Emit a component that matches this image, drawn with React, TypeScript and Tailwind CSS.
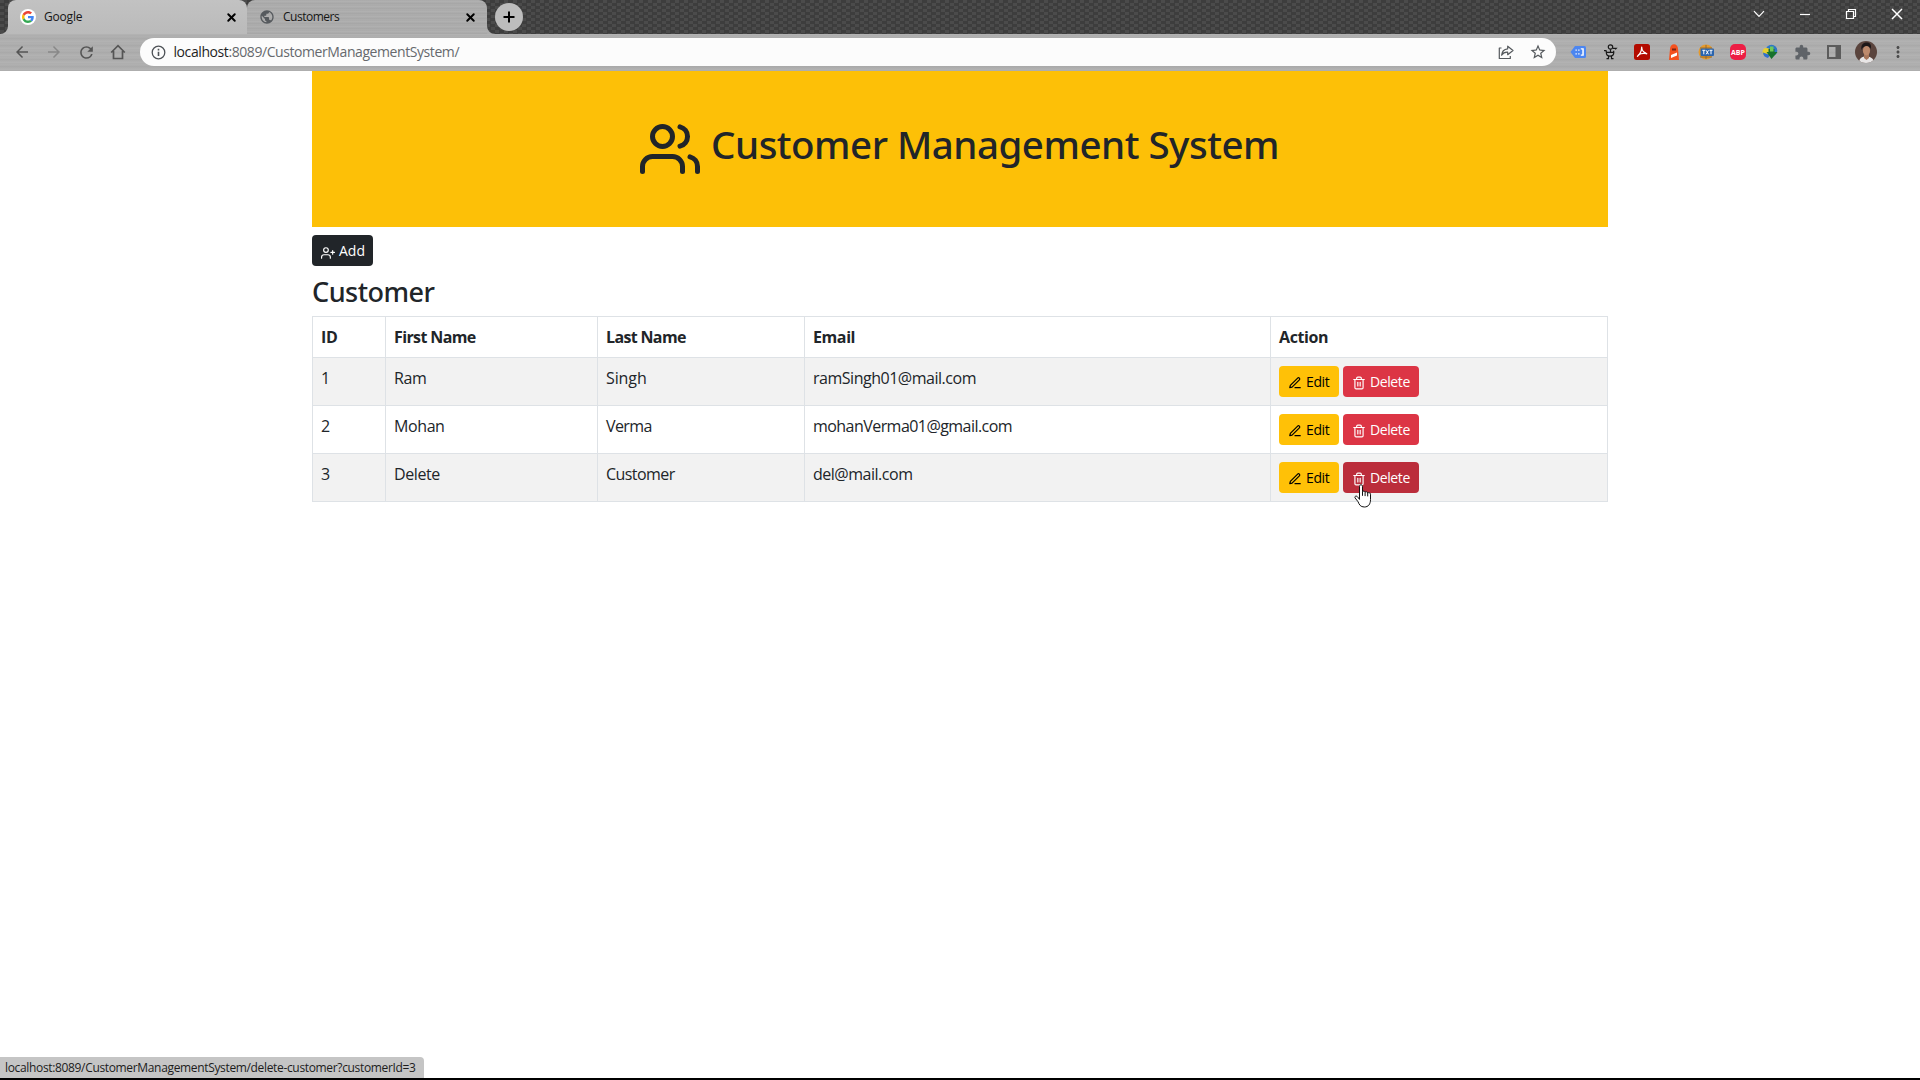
import React from "react";
import { FiUserPlus, FiEdit3, FiTrash2, FiX } from "react-icons/fi";
import { MdArrowBack, MdArrowForward, MdRefresh, MdExtension, MdMoreVert, MdPublic, MdStarBorder } from "react-icons/md";

type Customer = { id: number; first: string; last: string; email: string; emailCls: string; lastCls: string };

const customers: Customer[] = [
  { id: 1, first: "Ram", last: "Singh", email: "ramSingh01@mail.com", emailCls: "tracking-[-0.48px]", lastCls: "tracking-[-0.1px]" },
  { id: 2, first: "Mohan", last: "Verma", email: "mohanVerma01@gmail.com", emailCls: "tracking-[-0.55px]", lastCls: "tracking-[-0.6px]" },
  { id: 3, first: "Delete", last: "Customer", email: "del@mail.com", emailCls: "tracking-[-0.48px]", lastCls: "tracking-[-0.55px]" },
];

function UsersIcon() {
  return (
    <svg className="h-[60px] w-[60px] shrink-0" viewBox="0 0 24 24" fill="none" stroke="currentColor" strokeWidth="2" strokeLinecap="round" strokeLinejoin="round">
      <path d="M17 21v-2a4 4 0 0 0-4-4H5a4 4 0 0 0-4 4v2" />
      <circle cx="9" cy="7" r="4" />
      <path d="M23 21v-2a4 4 0 0 0-3-3.87" />
      <path d="M16 3.13a4 4 0 0 1 0 7.75" />
    </svg>
  );
}

function GoogleIcon() {
  return (
    <span className="flex h-4 w-4 shrink-0 items-center justify-center rounded-full bg-white">
      <svg className="h-3 w-3" viewBox="0 0 48 48">
        <path fill="#EA4335" d="M24 9.5c3.54 0 6.71 1.22 9.21 3.6l6.85-6.85C35.9 2.38 30.47 0 24 0 14.62 0 6.51 5.38 2.56 13.22l7.98 6.19C12.43 13.72 17.74 9.5 24 9.5z" />
        <path fill="#4285F4" d="M46.98 24.55c0-1.57-.15-3.09-.38-4.55H24v9.02h12.94c-.58 2.96-2.26 5.48-4.78 7.18l7.73 6c4.51-4.18 7.09-10.36 7.09-17.65z" />
        <path fill="#FBBC05" d="M10.53 28.59c-.48-1.45-.76-2.99-.76-4.59s.27-3.14.76-4.59l-7.98-6.19C.92 16.46 0 20.12 0 24c0 3.88.92 7.54 2.56 10.78l7.97-6.19z" />
        <path fill="#34A853" d="M24 48c6.48 0 11.93-2.13 15.89-5.81l-7.73-6c-2.15 1.45-4.92 2.3-8.16 2.3-6.26 0-11.57-4.22-13.47-9.91l-7.98 6.19C6.51 42.62 14.62 48 24 48z" />
      </svg>
    </span>
  );
}

function TabStrip() {
  return (
    <div className="flex h-[34px] bg-[repeating-conic-gradient(#3d3d3d_0_25%,#4b4b4b_0_50%)] bg-[size:9px_6px]">
      <div className="flex w-[8px] shrink-0 items-end">
        <svg className="h-[8px] w-[8px]" viewBox="0 0 8 8"><path d="M8 0v8H0a8 8 0 0 0 8-8z" fill="#b9b9b9" /></svg>
      </div>
      <div className="flex w-[239px] items-center rounded-t-lg bg-[linear-gradient(#c2c2c2,#bababa)] pr-[9px] pl-[12px] text-[12px] text-[#161616]">
        <GoogleIcon />
        <span className="ml-[8px] flex-1 leading-4 tracking-[-0.2px]">Google</span>
        <FiX className="h-[13px] w-[13px] text-black" strokeWidth={3.6} />
      </div>
      <div className="flex w-[240px] items-center rounded-t-lg bg-[repeating-linear-gradient(180deg,#a9a9a9_0px,#b2b2b2_2px,#a5a5a5_3px,#aeaeae_5px)] pr-[10px] pl-[12px] text-[12px] text-[#161616]">
        <MdPublic className="h-4 w-4 shrink-0 text-[#565a5e]" />
        <span className="ml-[8px] flex-1 leading-4 tracking-[-0.5px]">Customers</span>
        <FiX className="h-[13px] w-[13px] text-black" strokeWidth={3.6} />
      </div>
      <div className="flex w-[8px] shrink-0 items-end">
        <svg className="h-[8px] w-[8px]" viewBox="0 0 8 8"><path d="M0 0v8h8a8 8 0 0 1-8-8z" fill="#adadad" /></svg>
      </div>
      <div className="flex h-[34px] w-[28px] items-center">
        <svg className="h-[28px] w-[28px]" viewBox="0 0 28 28"><circle cx="14" cy="14" r="14" fill="#bdbdbd" /><path d="M14 8.500v11M8.500 14h11" stroke="#000" strokeWidth="2" /></svg>
      </div>
      <div className="flex flex-1 justify-end text-white">
        <svg className="h-7 w-[184px]" viewBox="0 0 184 28" fill="none" stroke="currentColor" strokeWidth="1.2">
          <path d="M18 11.200l5 5.200 5-5.200" />
          <path d="M64 14.500h10" />
          <path d="M110.500 11.500h7v7h-7zM112.500 11.500v-2h7v7h-2" />
          <path d="M156 9l10 10M166 9l-10 10" strokeWidth="1.500" />
        </svg>
      </div>
    </div>
  );
}

function Slot({ children }: { children: React.ReactNode }) {
  return <div className="flex h-8 w-8 items-center justify-center">{children}</div>;
}

function Extensions() {
  return (
    <div className="ml-[6px] flex items-center">
      <Slot>
        <svg className="h-4 w-4" viewBox="0 0 16 16"><path d="M5 2h9.500q1.500 0 1.500 1.500v9q0 1.500-1.500 1.500H5L.5 8z" fill="#4c86f0" /><path d="M5.500 5.500h1.300v1.300H5.500zM5.500 9.300h1.300v1.300H5.500zM8.200 5.500h1.300v1.300H8.200zM8.200 9.300h1.300v1.300H8.200zM10.800 4.300h3v7.500h-3v-1.300h1.500v-5h-1.500z" fill="#fff" /></svg>
      </Slot>
      <Slot>
        <svg className="h-4 w-4" viewBox="0 0 16 16" fill="none" stroke="#191919" strokeWidth="1.200"><circle cx="8.500" cy="3" r="2.200" /><path d="M10.700 4.300h3.500l-1 1M8.500 5.200v3M2 6.700h2l.5 1.600h7.200V6.700M4.300 8.300c0 2.300 1.400 3.900 3.700 3.900s3.800-1.600 3.800-3.900M6.500 12.300v2.400H4.500M9.500 12.300v2.400h2" /></svg>
      </Slot>
      <Slot>
        <svg className="h-4 w-4" viewBox="0 0 16 16"><rect width="16" height="16" rx="2.500" fill="#b30b00" /><path d="M7.700 3.200c.2 3 .8 4.600 5 6.600M7.700 3.200c0 3.500-.8 6-4.200 9M4.500 10.800c2.500-1.600 5-1.800 8.200-1.200" fill="none" stroke="#fff" strokeWidth="1.300" strokeLinecap="round" /></svg>
      </Slot>
      <Slot>
        <svg className="h-4 w-4" viewBox="0 0 16 16"><path d="M4 5C4 2 6 .3 8 .3S12 2 12 5l1 11H3z" fill="#f4511e" /><path d="M6 4.500h4v2H6z" fill="#7a2415" /><path d="M5 11l6-2.500v3L5 14z" fill="#fff" /></svg>
      </Slot>
      <Slot>
        <svg className="h-4 w-4" viewBox="0 0 16 16"><circle cx="8" cy="8" r="7.500" fill="#e79a2b" /><path d="M8 1v14M2 4h12M2 13h12" stroke="#7d6138" strokeWidth=".8" /><rect x="2.500" y="4.500" width="13.500" height="7.500" rx="1" fill="#2a64ae" /><path d="M4.300 6.300h3M5.800 6.300v4M8.200 6.300l2.300 4M10.500 6.300l-2.300 4M11.500 6.300h3M13 6.300v4" stroke="#fff" strokeWidth="1" /></svg>
      </Slot>
      <Slot>
        <span className="flex h-4 w-4 items-center justify-center rounded-[5px] bg-[#ed1e45] text-[7px] leading-none font-bold text-white">ABP</span>
      </Slot>
      <Slot>
        <svg className="h-4 w-4" viewBox="0 0 16 16"><circle cx="9.500" cy="6.500" r="5.800" fill="#2f78c4" /><circle cx="4.500" cy="8" r="4" fill="#e8cf2e" /><path d="M1 8.500c0 3 2 5 5 5.500l2-3z" fill="#2f6fd0" /><path d="M6.500 5h6v3h3L9.500 15 4.500 8h2z" fill="#17722c" /><path d="M8 2.500h3.500v5H8z" fill="#6fc95a" /></svg>
      </Slot>
      <Slot><MdExtension className="h-[17px] w-[17px] text-[#5f6368]" /></Slot>
      <Slot>
        <svg className="h-[14px] w-[14px]" viewBox="0 0 14 14"><path d="M0 0h14v14H0zM2 2v10h6.500V2z" fillRule="evenodd" fill="#5c5c5c" /></svg>
      </Slot>
      <Slot>
        <svg className="h-[22px] w-[22px]" viewBox="0 0 22 22">
          <defs><clipPath id="face"><circle cx="11" cy="11" r="11" /></clipPath></defs>
          <g clipPath="url(#face)"><rect width="22" height="22" fill="#5a443d" /><path d="M4 22c0-5 3-6.500 7-6.500s8 1.500 8 6.500z" fill="#e8e6e6" /><path d="M9 13h5v4l-2.500 2L9 17z" fill="#a8765a" /><ellipse cx="11.500" cy="9.500" rx="3.600" ry="5" fill="#bd8a6c" /><path d="M6.500 9c-1-6 2.500-7.500 5.500-7.500s5 2.500 3.600 6.500c-1-2-2-3-4-3s-4 1-5.100 4z" fill="#1d1718" /></g>
        </svg>
      </Slot>
      <Slot><MdMoreVert className="h-[18px] w-[18px] text-[#4b4b4b]" /></Slot>
    </div>
  );
}

function Toolbar() {
  return (
    <div className="flex h-[37px] items-center bg-[repeating-linear-gradient(180deg,#b4b4b4_0px,#acacac_2px,#b3b3b3_3px,#a8a8a8_4px,#b1b1b1_7px)] pb-[1px] text-[#555]">
      <div className="flex w-[140px] items-center pl-[13px]">
        <MdArrowBack className="h-[18px] w-[18px]" />
        <MdArrowForward className="ml-[14px] h-[18px] w-[18px] text-[#888]" />
        <MdRefresh className="ml-[14px] h-[19px] w-[19px]" />
        <svg className="ml-[14px] h-4 w-4" viewBox="0 0 16 16" fill="none" stroke="currentColor" strokeWidth="1.700"><path d="M1.200 8.500L8 1.700l6.800 6.800M3.500 7v7.500h9V7" /></svg>
      </div>
      <div className="flex h-7 w-[1416px] items-center rounded-full bg-[#fcfcfc] pl-[10.5px]">
        <svg className="h-[15px] w-[15px]" viewBox="0 0 15 15" fill="none" stroke="#4d5156"><circle cx="7.500" cy="7.500" r="6.300" strokeWidth="1.300" /><path d="M7.500 6.700v4.300M7.500 3.800v1.600" strokeWidth="1.600" /></svg>
        <span className="ml-[8px] flex-1 text-[14px] leading-5 tracking-[-0.42px] text-[#66696d]"><span className="text-[#1f1f1f]">localhost</span>:8089/CustomerManagementSystem/</span>
        <svg className="h-4 w-4" viewBox="0 0 16 16" fill="none" stroke="#55595d" strokeWidth="1.200" strokeLinejoin="round"><path d="M3.500 4H1.300v10.500h11V12M9.700 2.200L15 6.500l-5.300 4.200V8.200C7 8 5 9 3.600 11.200c.3-3.800 2.400-6 6.100-6.400z" /></svg>
        <MdStarBorder className="mr-[9px] ml-[15px] h-[18px] w-[18px] text-[#55595d]" />
      </div>
      <Extensions />
    </div>
  );
}

function HandCursor() {
  return (
    <svg className="pointer-events-none absolute top-[22px] left-[11px] z-10 h-6 w-[18px]" viewBox="0 0 18 24">
      <path d="M5.500 2.300c0-2 3-2 3 0v5.500c.3-1.100 2.500-.9 2.600.5.600-1 2.500-.7 2.600.7.700-.8 2.800-.4 2.800 1.200v5.300c0 4.500-2 7.500-6.200 7.500-3.800 0-5.200-2.500-6.200-5.200L1 13.800c-.6-1.600 1.500-2.500 2.700-.8l1.800 2.400z" fill="#fff" stroke="#111" strokeWidth="1" strokeLinejoin="round" />
      <path d="M8.500 7.800v4M11.100 8.300v3.800M13.700 9v3.400" stroke="#111" strokeWidth="1" />
    </svg>
  );
}

function Row({ c, active, striped }: { c: Customer; active: boolean; striped: boolean }) {
  const cell = "border border-[#dee2e6] p-2";
  return (
    <tr className={striped ? "h-12 bg-[#f2f2f2]" : "h-12 bg-white"}>
      <td className={cell}>{c.id}</td>
      <td className={cell}>{c.first}</td>
      <td className={cell + " " + c.lastCls}>{c.last}</td>
      <td className={cell + " " + c.emailCls}>{c.email}</td>
      <td className="border border-[#dee2e6] px-2 py-0">
        <div className="flex gap-1 py-2 text-[14px] leading-[21px]">
          <button className="flex h-[31px] w-[60px] items-center rounded bg-[#ffc107] pl-[9px] text-black">
            <FiEdit3 className="mt-[3px] h-[14px] w-[14px]" />
            <span className="ml-[4px] tracking-[-0.4px]">Edit</span>
          </button>
          <button className={active ? "relative flex h-[31px] w-[76px] items-center rounded bg-[#bb2d3b] pl-[9px] text-white" : "relative flex h-[31px] w-[76px] items-center rounded bg-[#dc3545] pl-[9px] text-white"}>
            <FiTrash2 className="mt-[3px] h-[14px] w-[14px]" />
            <span className="ml-[4px] tracking-[-0.4px]">Delete</span>
            {active && <HandCursor />}
          </button>
        </div>
      </td>
    </tr>
  );
}

export default function App() {
  const head = "border border-[#dee2e6] p-2 text-left font-bold";
  return (
    <div className="flex h-screen flex-col overflow-hidden bg-white font-['Open_Sans',sans-serif] text-[#212529]">
      <TabStrip />
      <Toolbar />
      <main className="mx-auto w-[1296px] flex-1">
        <header className="flex h-[156px] items-center justify-center bg-[#fdc007]">
          <UsersIcon />
          <h1 className="ml-[11px] pr-px pb-[11px] font-['Noto_Sans',sans-serif] text-[38.5px] leading-[48px] font-[550] tracking-[-0.5px] whitespace-nowrap">Customer Management System</h1>
        </header>
        <button className="mt-2 flex h-[31px] w-[61px] items-center rounded bg-[#212529] pl-[9px] text-[14px] leading-[21px] text-white">
          <FiUserPlus className="mt-[4px] h-[14px] w-[14px]" />
          <span className="ml-[4px]">Add</span>
        </button>
        <h3 className="mt-[9px] h-[41px] font-['Noto_Sans',sans-serif] text-[27px] leading-[34px] font-[550] tracking-[-0.5px]">Customer</h3>
        <table className="w-[1296px] table-fixed border-collapse text-[16px] leading-6 tracking-[-0.4px]">
          <colgroup>
            <col className="w-[73px]" />
            <col className="w-[212px]" />
            <col className="w-[207px]" />
            <col className="w-[466px]" />
            <col />
          </colgroup>
          <thead>
            <tr className="h-[41px]">
              <th className={head}>ID</th>
              <th className={head}><span className="tracking-[-0.62px]">First Name</span></th>
              <th className={head}><span className="tracking-[-0.65px]">Last Name</span></th>
              <th className={head}>Email</th>
              <th className={head}>Action</th>
            </tr>
          </thead>
          <tbody className="align-top">
            {customers.map((c, i) => (
              <Row key={c.id} c={c} striped={i % 2 === 0} active={c.id === 3} />
            ))}
          </tbody>
        </table>
      </main>
      <footer className="flex flex-col items-start">
        <div className="h-[21px] w-[424px] rounded-tr bg-[#c5c5c5] pl-[5px] text-[12px] leading-[21px] tracking-[-0.34px] whitespace-nowrap text-[#1c1c1c]">localhost:8089/CustomerManagementSystem/delete-customer?customerId=3</div>
        <div className="h-[2px] w-full bg-black" />
      </footer>
    </div>
  );
}
